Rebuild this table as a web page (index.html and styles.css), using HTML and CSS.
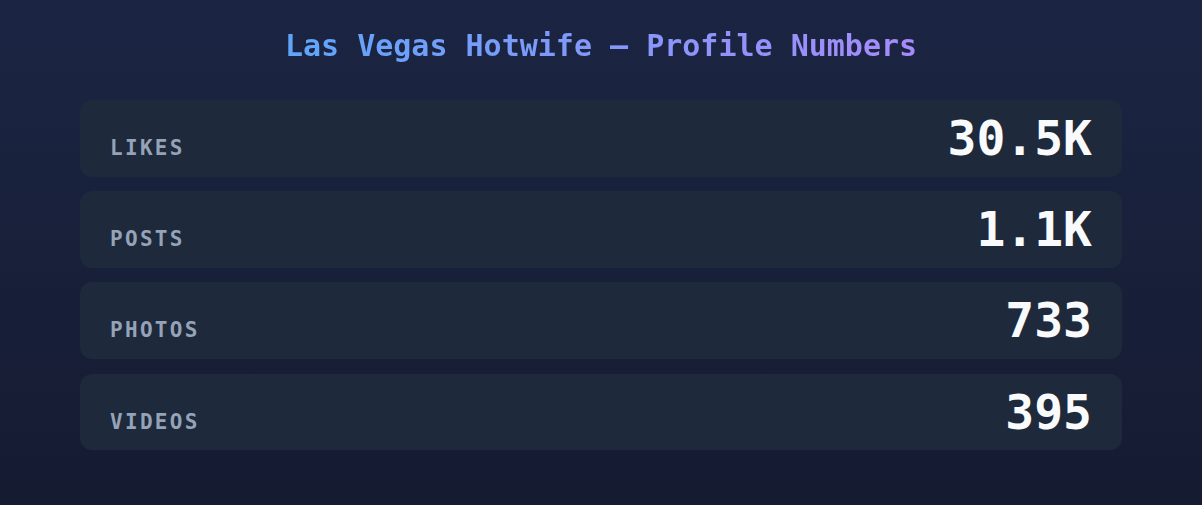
FILE: index.html
```html
<!DOCTYPE html>
<html>
<head>
    <title>Profile Numbers</title>
    <meta name="viewport" content="width=device-width, initial-scale=1">
    <link rel="stylesheet" href="styles.css">
</head>
<body>

    <div class="container">
        <h1 class="title">Las Vegas Hotwife — Profile Numbers</h1>

        <div class="stats">
            <div class="stat">
                <span class="label">Likes</span>
                <span class="value">30.5K</span>
            </div>
            <div class="stat">
                <span class="label">Posts</span>
                <span class="value">1.1K</span>
            </div>
            <div class="stat">
                <span class="label">Photos</span>
                <span class="value">733</span>
            </div>
            <div class="stat">
                <span class="label">Videos</span>
                <span class="value">395</span>
            </div>
        </div>
    </div>

</body>
</html>
```

FILE: styles.css
```css
* {
    box-sizing: border-box;
}

html, body {
    height: 100%;
}

body {
    margin: 0;
    padding: 0;
    background: linear-gradient(180deg, #1b2543 0%, #151b31 100%);
    font-family: "DejaVu Sans Mono", "Liberation Mono", monospace;
    color: #f8fafc;
}

.container {
    padding: 28px 80px;
}

.title {
    margin: 0 auto 37px;
    width: fit-content;
    font-size: 30px;
    font-weight: bold;
    text-align: center;
    background: linear-gradient(90deg, #60a5fa 0%, #a78bfa 100%);
    -webkit-background-clip: text;
    background-clip: text;
    color: transparent;
}

.stats {
    display: flex;
    flex-direction: column;
    gap: 14.4px;
}

.stat {
    display: flex;
    justify-content: space-between;
    align-items: baseline;
    padding: 12px 30px;
    background-color: #1e293b;
    border-radius: 12px;
}

.label {
    font-size: 21px;
    font-weight: bold;
    letter-spacing: 0.11em;
    text-transform: uppercase;
    color: #94a3b8;
}

.value {
    font-size: 48px;
    line-height: 1.1;
    font-weight: bold;
    color: #f8fafc;
}
```
